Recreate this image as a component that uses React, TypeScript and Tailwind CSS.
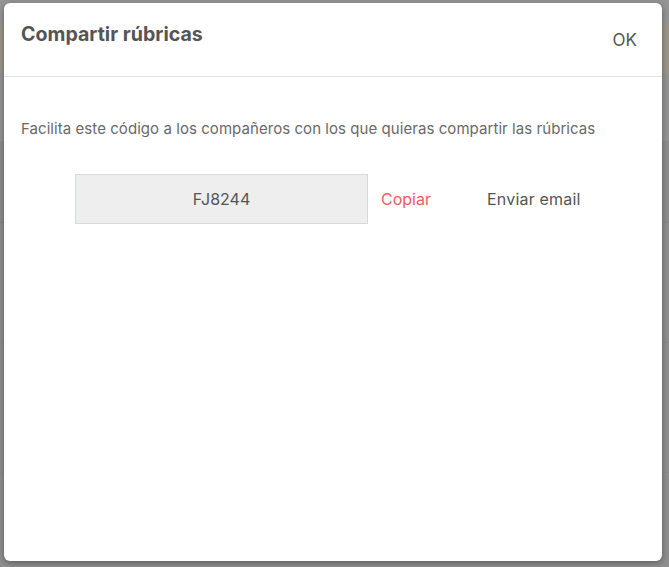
import React from 'react';

const App = () => {
  return (
    <div
      className="relative w-[669px] h-[567px] overflow-hidden bg-[#8e8e8e]"
      style={{ fontFamily: 'Inter, "Noto Sans", sans-serif' }}
    >
      {/* dimmed page behind the dialog */}
      <div className="flex flex-col">
        <div className="h-[23px] bg-[#949494]" />
        <div className="h-[50px] bg-[#9a9587]" />
        <div className="h-[68px] bg-[#939393]" />
        <div className="h-[82px] bg-[#8c8c8c] border-b border-[#868686]" />
        <div className="h-[120px] border-b border-[#878a90]" />
        <div className="h-[130px] border-b border-[#878a90]" />
      </div>

      {/* dialog */}
      <div className="absolute left-[4px] top-[3px] w-[658px] h-[558px] bg-white rounded-[6px] shadow-[0_2px_6px_rgba(0,0,0,0.35)] flex flex-col">
        <div className="h-[74px] border-b border-[#e4e4e4] flex items-start justify-between pl-[17px] pr-[25px]">
          <h2 className="mt-[19px] text-[19.6px] font-bold text-[#555555] leading-[24px]">Compartir rúbricas</h2>
          <button className="mt-[26px] text-[17px] text-[#555555] leading-[22px]">OK</button>
        </div>
        <div className="pt-[42px] pl-[17px]">
          <p className="text-[15px] text-[#696969] leading-[20px] tracking-[0.06px]">
            Facilita este código a los compañeros con los que quieras compartir las rúbricas
          </p>
          <div className="mt-[35px] ml-[54px] flex items-center">
            <div className="w-[293px] h-[50px] bg-[#eeeeee] border border-[#d3dcdc] flex items-center justify-center text-[16px] text-[#555555]">
              FJ8244
            </div>
            <button className="ml-[13px] text-[16px] text-[#f25a62]">Copiar</button>
            <button className="ml-[56px] text-[16px] text-[#555555] tracking-[0.2px]">Enviar email</button>
          </div>
        </div>
      </div>
    </div>
  );
};

export default App;
